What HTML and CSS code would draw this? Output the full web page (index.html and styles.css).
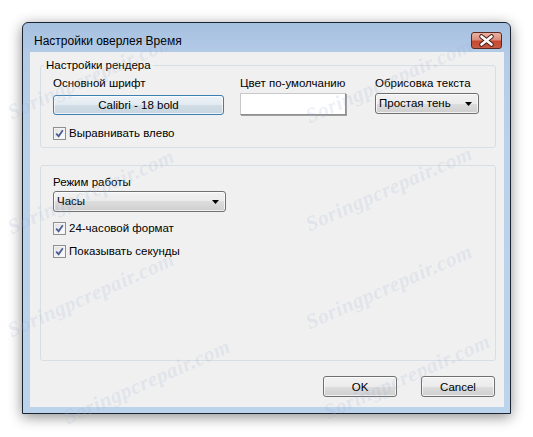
FILE: index.html
```html
<!DOCTYPE html>
<html lang="ru">
<head>
<meta charset="utf-8">
<title>Настройки оверлея Время</title>
<link rel="stylesheet" href="styles.css">
</head>
<body>
<div class="window">
  <div class="titlebar">
    <span class="title">Настройки оверлея Время</span>
    <span class="close">
      <svg width="31" height="17" viewBox="0 0 31 17">
        <path d="M10.5 4.5 L20.5 12.5 M20.5 4.5 L10.5 12.5" stroke="#4a1e18" stroke-width="4.6" stroke-linecap="round" fill="none"/>
        <path d="M10.5 4.5 L20.5 12.5 M20.5 4.5 L10.5 12.5" stroke="#ffffff" stroke-width="2.6" stroke-linecap="round" fill="none"/>
      </svg>
    </span>
  </div>
  <div class="client">
    <fieldset class="group g1">
      <legend>Настройки рендера</legend>
      <div class="gbody g1body">
        <div class="row3">
          <div class="col">
            <div class="lbl">Основной шрифт</div>
            <button class="btn font-btn" type="button">Calibri - 18 bold</button>
          </div>
          <div class="col">
            <div class="lbl">Цвет по-умолчанию</div>
            <div class="swatch"></div>
          </div>
          <div class="col">
            <div class="lbl">Обрисовка текста</div>
            <div class="combo combo-small"><span>Простая тень</span><svg class="arrow" width="7" height="4" viewBox="0 0 7 4"><path d="M0 0 H7 L3.5 4 Z" fill="#000"/></svg></div>
          </div>
        </div>
        <div class="check check-first"><span class="box"><svg width="9" height="9" viewBox="0 0 9 9"><path d="M1.2 4.6 L3.6 7.2 L7.8 1.2" stroke="#4a5e96" stroke-width="1.8" fill="none"/></svg></span>Выравнивать влево</div>
      </div>
    </fieldset>
    <fieldset class="group g2">
      <div class="gbody g2body">
        <div class="lbl">Режим работы</div>
        <div class="combo combo-wide"><span>Часы</span><svg class="arrow" width="7" height="4" viewBox="0 0 7 4"><path d="M0 0 H7 L3.5 4 Z" fill="#000"/></svg></div>
        <div class="check check-a"><span class="box"><svg width="9" height="9" viewBox="0 0 9 9"><path d="M1.2 4.6 L3.6 7.2 L7.8 1.2" stroke="#4a5e96" stroke-width="1.8" fill="none"/></svg></span>24-часовой формат</div>
        <div class="check check-b"><span class="box"><svg width="9" height="9" viewBox="0 0 9 9"><path d="M1.2 4.6 L3.6 7.2 L7.8 1.2" stroke="#4a5e96" stroke-width="1.8" fill="none"/></svg></span>Показывать секунды</div>
      </div>
    </fieldset>
    <div class="actions">
      <button class="btn act" type="button">OK</button>
      <button class="btn act" type="button">Cancel</button>
    </div>
  </div>
</div>
<div class="watermarks" aria-hidden="true">
  <span class="wm wm1">Soringpcrepair.com</span>
  <span class="wm wm2">Soringpcrepair.com</span>
  <span class="wm wm3">Soringpcrepair.com</span>
  <span class="wm wm4">Soringpcrepair.com</span>
  <span class="wm wm5">Soringpcrepair.com</span>
  <span class="wm wm6">Soringpcrepair.com</span>
  <span class="wm wm7">Soringpcrepair.com</span>
  <span class="wm wm8">Soringpcrepair.com</span>
</div>
</body>
</html>
```
FILE: styles.css
```css
html, body {
  margin: 0;
  padding: 0;
}
body {
  width: 533px;
  height: 437px;
  background: #ffffff;
  overflow: hidden;
  position: relative;
  font-family: "Liberation Sans", Arial, sans-serif;
  font-size: 11.5px;
  color: #000;
}
.window {
  margin: 22px 0 0 22px;
  width: 489px;
  height: 392px;
  box-sizing: border-box;
  border: 1px solid #1c2430;
  border-radius: 6px 6px 0 0;
  background: linear-gradient(to bottom, #a6c0df 0px, #b3cbe7 30px, #bad1eb 120px, #bcd3ec 100%);
  box-shadow: 0 3px 14px rgba(0, 0, 0, 0.45);
  display: flex;
  flex-direction: column;
  padding: 0 6px 6px 7px;
}
.titlebar {
  height: 29px;
  display: flex;
  align-items: flex-start;
  justify-content: space-between;
  margin: 0 -6px 0 -7px;
  padding: 0 8px 0 11px;
}
.title {
  font-size: 12px;
  line-height: 15px;
  margin-top: 11px;
  color: #000;
}
.close {
  margin-top: 9px;
  width: 31px;
  height: 17px;
  box-sizing: border-box;
  border: 1px solid #5a2a22;
  border-radius: 3px;
  background: linear-gradient(to bottom, #e9b2a4 0%, #dd8e7b 45%, #c7472e 55%, #c95b43 100%);
  display: flex;
  align-items: center;
  justify-content: center;
  overflow: hidden;
}
.close svg {
  display: block;
  margin: -1px;
}
.client {
  flex: 1;
  background: #f0f0f0;
  display: flex;
  flex-direction: column;
  padding: 6px 8px 10px 10px;
}
.group {
  margin: 0;
  padding: 0;
  border: 1px solid #d5dfe5;
  border-radius: 3px;
  min-width: 0;
}
.group legend {
  padding: 0 2px;
  margin-left: 3px;
  line-height: 15px;
}
.gbody {
  padding-left: 12px;
}
.g1body {
  padding-top: 3px;
  padding-bottom: 5px;
}
.row3 {
  display: grid;
  grid-template-columns: 187px 135px 1fr;
}
.col {
  display: flex;
  flex-direction: column;
  align-items: flex-start;
}
.lbl {
  line-height: 15px;
}
.btn {
  font-family: inherit;
  font-size: 11.5px;
  color: #000;
  box-sizing: border-box;
  border: 1px solid #707070;
  border-radius: 3px;
  background: linear-gradient(to bottom, #f2f2f2 0%, #ebebeb 50%, #dddddd 50%, #cfcfcf 100%);
  box-shadow: inset 0 0 0 1px rgba(255, 255, 255, 0.7);
  padding: 0;
  margin: 0;
}
.font-btn {
  margin-top: 4px;
  width: 171px;
  height: 20px;
  border-color: #3c7fb1;
  background: linear-gradient(to bottom, #eef3f7 0%, #e2eaf0 50%, #d2dde6 50%, #c8d5df 100%);
}
.swatch {
  margin-top: 2px;
  width: 106px;
  height: 22px;
  box-sizing: border-box;
  background: #ffffff;
  border: 1px solid #c9c9c9;
  border-right-color: #8e8e8e;
  border-bottom-color: #8e8e8e;
  box-shadow: 1px 1px 0 #a0a0a0;
}
.combo {
  box-sizing: border-box;
  height: 21px;
  border: 1px solid #707070;
  border-radius: 3px;
  background: linear-gradient(to bottom, #f2f2f2 0%, #ebebeb 50%, #dddddd 50%, #cfcfcf 100%);
  box-shadow: inset 0 0 0 1px rgba(255, 255, 255, 0.7);
  display: flex;
  align-items: center;
  justify-content: space-between;
  padding: 0 6px 0 3px;
  line-height: 15px;
}
.combo .arrow {
  display: block;
}
.combo-small {
  margin-top: 2px;
  width: 104px;
}
.combo-wide {
  margin-top: 1px;
  width: 173px;
}
.check {
  display: flex;
  align-items: center;
  line-height: 15px;
  height: 15px;
}
.check .box {
  width: 13px;
  height: 13px;
  box-sizing: border-box;
  border: 1px solid #8e8f8f;
  background: linear-gradient(135deg, #dcdcdc 0%, #f4f4f4 60%, #ffffff 100%);
  box-shadow: inset 0 0 0 1px #f4f4f4;
  display: flex;
  align-items: center;
  justify-content: center;
  margin-right: 3px;
}
.check .box svg {
  display: block;
}
.check-first {
  margin-top: 11px;
}
.g1 {
  height: 90px;
  box-sizing: border-box;
}
.g2 {
  margin-top: 17px;
  flex: 1;
}
.g2body {
  padding-top: 9px;
}
.check-a {
  margin-top: 9px;
}
.check-b {
  margin-top: 8px;
}
.actions {
  margin-top: 15px;
  display: flex;
  justify-content: flex-end;
  gap: 24px;
  padding-right: 1px;
}
.act {
  width: 74px;
  height: 21px;
}
.watermarks {
  position: absolute;
  inset: 0;
  pointer-events: none;
  overflow: hidden;
}
.wm {
  position: absolute;
  font-family: "Liberation Serif", serif;
  font-style: italic;
  font-weight: bold;
  font-size: 21px;
  letter-spacing: 0.5px;
  color: rgba(160, 178, 210, 0.2);
  transform: rotate(-24deg);
  transform-origin: left bottom;
  white-space: nowrap;
}
.wm1 { left: 14px; top: 100px; }
.wm2 { left: 312px; top: 104px; }
.wm3 { left: 14px; top: 215px; }
.wm4 { left: 312px; top: 212px; }
.wm5 { left: 14px; top: 318px; }
.wm6 { left: 312px; top: 310px; }
.wm7 { left: 70px; top: 405px; }
.wm8 { left: 330px; top: 400px; }
```
